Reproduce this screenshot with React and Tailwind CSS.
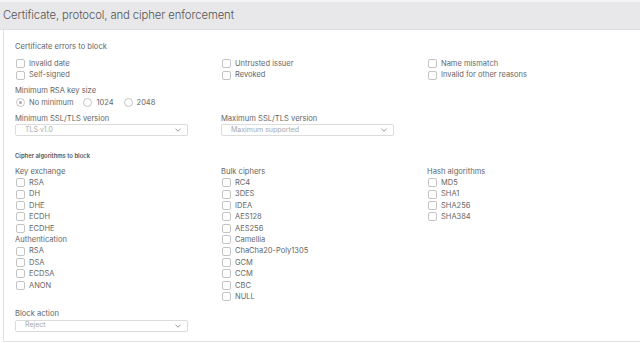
const font = { fontFamily: "Inter, 'Noto Sans', sans-serif" };

function Box() {
  return <span className="inline-block w-[9px] h-[9px] border border-[#c4c4c4] rounded-[2px] bg-white shrink-0" />;
}

function Check({ label }) {
  return (
    <div className="flex items-center h-[11.4px] pl-[1px] gap-[4px] text-[7.5px] text-[#666]">
      <Box />
      <span>{label}</span>
    </div>
  );
}

function Radio({ label, checked }) {
  return (
    <div className="flex items-center gap-[4px]">
      <span className="w-[9px] h-[9px] rounded-full border border-[#c4c4c4] flex items-center justify-center">
        {checked && <span className="w-[3.5px] h-[3.5px] rounded-full bg-[#aaa]" />}
      </span>
      <span>{label}</span>
    </div>
  );
}

function Label({ children, className = "" }) {
  return <div className={"h-[11.4px] leading-[11.4px] text-[7.6px] text-[#666] " + className}>{children}</div>;
}

function Select({ value }) {
  return (
    <div className="w-[173px] h-[12px] border border-[#dcdcdc] rounded-[2px] flex items-center justify-between pl-[9px] pr-[6px] text-[7px] text-[#a8a8a8]">
      <span>{value}</span>
      <svg width="6" height="4" viewBox="0 0 6 4" fill="none" stroke="#999" strokeWidth="1">
        <path d="M0.5 0.8 L3 3.2 L5.5 0.8" />
      </svg>
    </div>
  );
}

export default function App() {
  const kx = ["RSA", "DH", "DHE", "ECDH", "ECDHE"];
  const auth = ["RSA", "DSA", "ECDSA", "ANON"];
  const bulk = ["RC4", "3DES", "IDEA", "AES128", "AES256", "Camellia", "ChaCha20-Poly1305", "GCM", "CCM", "CBC", "NULL"];
  const hash = ["MD5", "SHA1", "SHA256", "SHA384"];
  return (
    <div className="w-[640px] h-[343px] bg-white overflow-hidden" style={font}>
      <div className="h-[30px] bg-[#e8e8ea] border-t-[2px] border-[#f4f4f5] border-b border-b-[#dddde0] flex items-center pl-[3px]">
        <span className="text-[11.3px] font-light text-[#555] tracking-[-0.1px]">Certificate, protocol, and cipher enforcement</span>
      </div>
      <div className="ml-[3px] h-[312px] border-l border-b border-[#e2e2e2] pl-[11px] pt-[11px]">
        <Label>Certificate errors to block</Label>
        <div className="grid grid-cols-[206px_206px_206px] mt-[5.6px]">
          <div>
            <Check label="Invalid date" />
            <Check label="Self-signed" />
          </div>
          <div>
            <Check label="Untrusted issuer" />
            <Check label="Revoked" />
          </div>
          <div>
            <Check label="Name mismatch" />
            <Check label="Invalid for other reasons" />
          </div>
        </div>
        <Label className="mt-[4.2px]">Minimum RSA key size</Label>
        <div className="mt-[0.6px] h-[11.4px] flex items-center gap-[10px] text-[7.5px] text-[#666] pl-[1px]">
          <Radio label="No minimum" checked />
          <Radio label="1024" />
          <Radio label="2048" />
        </div>
        <div className="grid grid-cols-[206px_206px] mt-[4.6px]">
          <div>
            <Label>Minimum SSL/TLS version</Label>
            <Select value="TLS v1.0" />
          </div>
          <div>
            <Label>Maximum SSL/TLS version</Label>
            <Select value="Maximum supported" />
          </div>
        </div>
        <div className="mt-[13.3px] h-[11.4px] leading-[11.4px] text-[5.9px] font-semibold text-[#555]">Cipher algorithms to block</div>
        <div className="grid grid-cols-[206px_206px_206px] mt-[4.6px]">
          <div>
            <Label>Key exchange</Label>
            {kx.map((k) => <Check key={k} label={k} />)}
            <Label>Authentication</Label>
            {auth.map((k) => <Check key={k + "a"} label={k} />)}
          </div>
          <div>
            <Label>Bulk ciphers</Label>
            {bulk.map((k) => <Check key={k} label={k} />)}
          </div>
          <div>
            <Label>Hash algorithms</Label>
            {hash.map((k) => <Check key={k} label={k} />)}
          </div>
        </div>
        <Label className="mt-[6px]">Block action</Label>
        <Select value="Reject" />
      </div>
    </div>
  );
}
